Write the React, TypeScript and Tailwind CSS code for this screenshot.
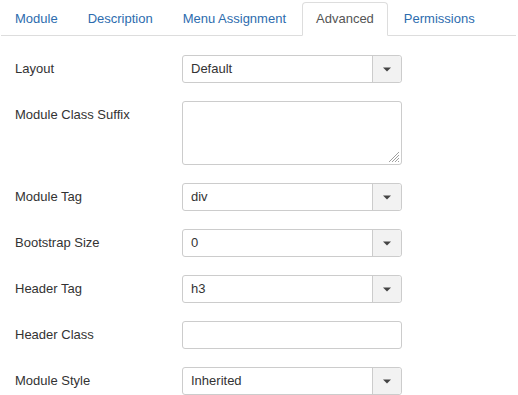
import React from 'react'

const tabs = ['Module', 'Description', 'Menu Assignment', 'Advanced', 'Permissions']

const Caret = () => (
  <svg width="8" height="5" viewBox="0 0 8 5" className="text-[#444]">
    <path d="M0 0.5 L8 0.5 L4 4.5 Z" fill="currentColor" />
  </svg>
)

const Select = ({ value }: { value: string }) => (
  <div className="flex h-[28px] w-[220px] rounded-[3px] border border-[#ccc] bg-white">
    <div className="flex flex-1 items-center px-[8px] text-[13px] text-[#333]">{value}</div>
    <div className="flex w-[29px] items-center justify-center rounded-r-[3px] border-l border-[#ccc] bg-[#f2f2f2]">
      <Caret />
    </div>
  </div>
)

const Row = ({ label, children }: { label: string; children: React.ReactNode }) => (
  <div className="mb-[18px] flex">
    <div className="w-[167px] pt-[5px] text-[13px] leading-[18px] text-[#333]">{label}</div>
    {children}
  </div>
)

export default function App() {
  return (
    <div className="h-[395px] w-[518px] bg-white font-['Liberation_Sans',Arial,sans-serif]">
      <div className="ml-[1px] mr-[2px] mt-[2px] flex border-b border-[#ddd]">
        {tabs.map((t) => {
          const active = t === 'Advanced'
          return (
            <div
              key={t}
              className={
                active
                  ? '-mb-px mr-[2px] rounded-t-[4px] border border-[#ddd] border-b-white bg-white px-[13px] pb-[7px] pt-[7px] text-[13px] leading-[18px] text-[#555]'
                  : '-mb-px mr-[2px] border border-transparent px-[13px] pb-[7px] pt-[7px] text-[13px] leading-[18px] text-[#2d6cae]'
              }
            >
              {t}
            </div>
          )
        })}
      </div>

      <div className="pl-[15px] pt-[19px]">
        <Row label="Layout">
          <Select value="Default" />
        </Row>
        <Row label="Module Class Suffix">
          <div className="relative h-[64px] w-[220px] rounded-[3px] border border-[#ccc] bg-white">
            <svg width="10" height="10" viewBox="0 0 10 10" className="absolute bottom-[2px] right-[2px]">
              <path d="M10 0 L0 10 M10 3 L3 10 M10 6 L6 10 M10 9 L9 10" stroke="#888" strokeWidth="0.8" />
            </svg>
          </div>
        </Row>
        <Row label="Module Tag">
          <Select value="div" />
        </Row>
        <Row label="Bootstrap Size">
          <Select value="0" />
        </Row>
        <Row label="Header Tag">
          <Select value="h3" />
        </Row>
        <Row label="Header Class">
          <div className="h-[28px] w-[220px] rounded-[3px] border border-[#ccc] bg-white" />
        </Row>
        <Row label="Module Style">
          <Select value="Inherited" />
        </Row>
      </div>
    </div>
  )
}
